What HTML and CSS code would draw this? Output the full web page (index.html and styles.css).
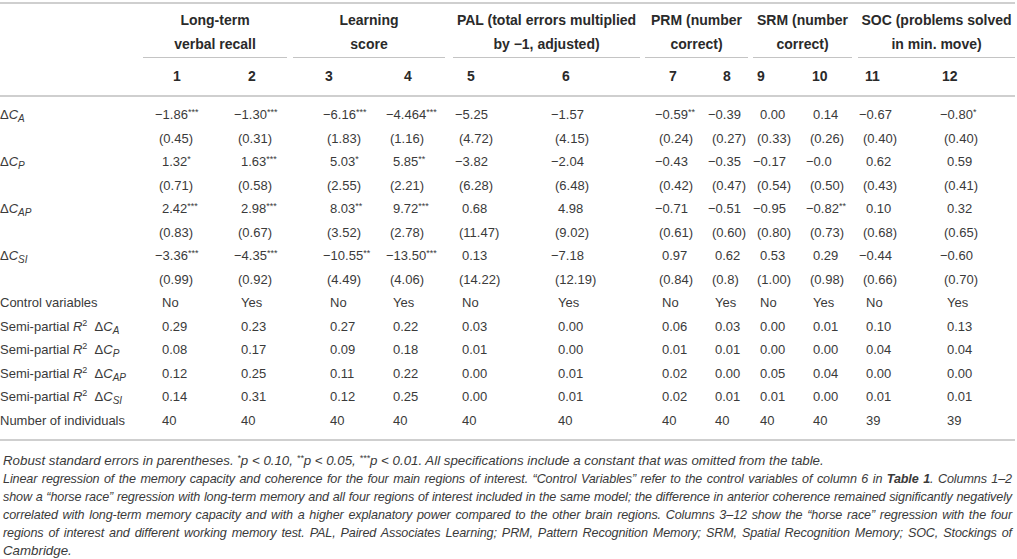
FILE: index.html
```html
<!DOCTYPE html>
<html>
<head>
<meta charset="utf-8">
<link rel="stylesheet" href="styles.css">
</head>
<body>
<div class="page">
<table class="reg">
<colgroup>
<col class="w-lab"><col class="w1"><col class="w2"><col class="w3"><col class="w4"><col class="w5"><col class="w6"><col class="w7"><col class="w8"><col class="w9"><col class="w10"><col class="w11"><col class="w12">
</colgroup>
<thead>
<tr class="groups">
<th></th>
<th colspan="2"><div class="g g1">Long-term<br>verbal recall</div></th>
<th colspan="2"><div class="g g2">Learning<br>score</div></th>
<th colspan="2"><div class="g g3">PAL (total errors multiplied<br>by −1, adjusted)</div></th>
<th colspan="2"><div class="g g4">PRM (number<br>correct)</div></th>
<th colspan="2"><div class="g g5">SRM (number<br>correct)</div></th>
<th colspan="2"><div class="g g6">SOC (problems solved<br>in min. move)</div></th>
</tr>
<tr class="nums">
<th></th><th>1</th><th>2</th><th>3</th><th>4</th><th>5</th><th>6</th><th>7</th><th>8</th><th>9</th><th>10</th><th>11</th><th>12</th>
</tr>
</thead>
<tbody>
<tr class="first">
<th>Δ<i>C</i><sub><i>A</i></sub></th>
<td class="n">−1.86<sup>***</sup></td><td class="n">−1.30<sup>***</sup></td><td class="n">−6.16<sup>***</sup></td><td class="n">−4.464<sup>***</sup></td><td class="n">−5.25</td><td class="n">−1.57</td><td class="n">−0.59<sup>**</sup></td><td class="n">−0.39</td><td>0.00</td><td>0.14</td><td class="n">−0.67</td><td class="n">−0.80<sup>*</sup></td>
</tr>
<tr class="se">
<th></th>
<td>(0.45)</td><td>(0.31)</td><td>(1.83)</td><td>(1.16)</td><td>(4.72)</td><td>(4.15)</td><td>(0.24)</td><td>(0.27)</td><td>(0.33)</td><td>(0.26)</td><td>(0.40)</td><td>(0.40)</td>
</tr>
<tr>
<th>Δ<i>C</i><sub><i>P</i></sub></th>
<td>1.32<sup>*</sup></td><td>1.63<sup>***</sup></td><td>5.03<sup>*</sup></td><td>5.85<sup>**</sup></td><td class="n">−3.82</td><td class="n">−2.04</td><td class="n">−0.43</td><td class="n">−0.35</td><td class="n">−0.17</td><td class="n">−0.0</td><td>0.62</td><td>0.59</td>
</tr>
<tr class="se">
<th></th>
<td>(0.71)</td><td>(0.58)</td><td>(2.55)</td><td>(2.21)</td><td>(6.28)</td><td>(6.48)</td><td>(0.42)</td><td>(0.47)</td><td>(0.54)</td><td>(0.50)</td><td>(0.43)</td><td>(0.41)</td>
</tr>
<tr>
<th>Δ<i>C</i><sub><i>AP</i></sub></th>
<td>2.42<sup>***</sup></td><td>2.98<sup>***</sup></td><td>8.03<sup>**</sup></td><td>9.72<sup>***</sup></td><td>0.68</td><td>4.98</td><td class="n">−0.71</td><td class="n">−0.51</td><td class="n">−0.95</td><td class="n">−0.82<sup>**</sup></td><td>0.10</td><td>0.32</td>
</tr>
<tr class="se">
<th></th>
<td>(0.83)</td><td>(0.67)</td><td>(3.52)</td><td>(2.78)</td><td>(11.47)</td><td>(9.02)</td><td>(0.61)</td><td>(0.60)</td><td>(0.80)</td><td>(0.73)</td><td>(0.68)</td><td>(0.65)</td>
</tr>
<tr>
<th>Δ<i>C</i><sub><i>SI</i></sub></th>
<td class="n">−3.36<sup>***</sup></td><td class="n">−4.35<sup>***</sup></td><td class="n">−10.55<sup>**</sup></td><td class="n">−13.50<sup>***</sup></td><td>0.13</td><td class="n">−7.18</td><td>0.97</td><td>0.62</td><td>0.53</td><td>0.29</td><td class="n">−0.44</td><td class="n">−0.60</td>
</tr>
<tr class="se">
<th></th>
<td>(0.99)</td><td>(0.92)</td><td>(4.49)</td><td>(4.06)</td><td>(14.22)</td><td>(12.19)</td><td>(0.84)</td><td>(0.8)</td><td>(1.00)</td><td>(0.98)</td><td>(0.66)</td><td>(0.70)</td>
</tr>
<tr>
<th>Control variables</th>
<td>No</td><td>Yes</td><td>No</td><td>Yes</td><td>No</td><td>Yes</td><td>No</td><td>Yes</td><td>No</td><td>Yes</td><td>No</td><td>Yes</td>
</tr>
<tr>
<th>Semi-partial <i>R</i><sup class="pw">2</sup> &nbsp;Δ<i>C</i><sub><i>A</i></sub></th>
<td>0.29</td><td>0.23</td><td>0.27</td><td>0.22</td><td>0.03</td><td>0.00</td><td>0.06</td><td>0.03</td><td>0.00</td><td>0.01</td><td>0.10</td><td>0.13</td>
</tr>
<tr>
<th>Semi-partial <i>R</i><sup class="pw">2</sup> &nbsp;Δ<i>C</i><sub><i>P</i></sub></th>
<td>0.08</td><td>0.17</td><td>0.09</td><td>0.18</td><td>0.01</td><td>0.00</td><td>0.01</td><td>0.01</td><td>0.00</td><td>0.00</td><td>0.04</td><td>0.04</td>
</tr>
<tr>
<th>Semi-partial <i>R</i><sup class="pw">2</sup> &nbsp;Δ<i>C</i><sub><i>AP</i></sub></th>
<td>0.12</td><td>0.25</td><td>0.11</td><td>0.22</td><td>0.00</td><td>0.01</td><td>0.02</td><td>0.00</td><td>0.05</td><td>0.04</td><td>0.00</td><td>0.00</td>
</tr>
<tr>
<th>Semi-partial <i>R</i><sup class="pw">2</sup> &nbsp;Δ<i>C</i><sub><i>SI</i></sub></th>
<td>0.14</td><td>0.31</td><td>0.12</td><td>0.25</td><td>0.00</td><td>0.01</td><td>0.02</td><td>0.01</td><td>0.01</td><td>0.00</td><td>0.01</td><td>0.01</td>
</tr>
<tr class="last">
<th>Number of individuals</th>
<td>40</td><td>40</td><td>40</td><td>40</td><td>40</td><td>40</td><td>40</td><td>40</td><td>40</td><td>40</td><td>39</td><td>39</td>
</tr>
</tbody>
</table>
<div class="notes">
<span class="line first-note">Robust standard errors in parentheses. <sup>*</sup>p &lt; 0.10, <sup>**</sup>p &lt; 0.05, <sup>***</sup>p &lt; 0.01. All specifications include a constant that was omitted from the table.</span>
<span class="line just">Linear regression of the memory capacity and coherence for the four main regions of interest. “Control Variables” refer to the control variables of column 6 in <b>Table 1</b>. Columns 1–2</span>
<span class="line just">show a “horse race” regression with long-term memory and all four regions of interest included in the same model; the difference in anterior coherence remained significantly negatively</span>
<span class="line just">correlated with long-term memory capacity and with a higher explanatory power compared to the other brain regions. Columns 3–12 show the “horse race” regression with the four</span>
<span class="line just">regions of interest and different working memory test. PAL, Paired Associates Learning; PRM, Pattern Recognition Memory; SRM, Spatial Recognition Memory; SOC, Stockings of</span>
<span class="line last-note">Cambridge.</span>
</div>
</div>
</body>
</html>
```
FILE: styles.css
```css
html, body {
  margin: 0;
  padding: 0;
  background: #ffffff;
}

.page {
  padding-top: 2px;
  width: 1015px;
  font-family: "Liberation Sans", Arial, sans-serif;
  font-size: 13px;
  color: #3a3a3a;
}

.reg {
  width: 1015px;
  table-layout: fixed;
  border-collapse: collapse;
  border-top: 2px solid #cfcfcf;
  border-bottom: 2px solid #cfcfcf;
}

.w-lab { width: 143px; }
.w1 { width: 72px; }
.w2 { width: 78px; }
.w3 { width: 76px; }
.w4 { width: 84px; }
.w5 { width: 67px; }
.w6 { width: 125px; }
.w7 { width: 56px; }
.w8 { width: 52px; }
.w9 { width: 47px; }
.w10 { width: 58px; }
.w11 { width: 72px; }
.w12 { width: 85px; }

.reg th, .reg td {
  padding: 0;
  white-space: nowrap;
  font-weight: normal;
  text-align: left;
  vertical-align: top;
}

/* group header row */
.groups th {
  padding-top: 4px;
}
.g {
  font-weight: bold;
  font-size: 14px;
  color: #2a2a2a;
  line-height: 24px;
  text-align: center;
  padding-bottom: 1px;
  border-bottom: 1px solid #c4c4c4;
}
.g1 { margin-right: 6px; }
.g2 { margin-right: 8px; }
.g3 { margin-right: 5px; }
.g4 { margin-right: 5px; }
.g5 { margin-right: 6px; }
.g6 { margin-right: 0; }

/* column number row */
.nums {
  border-bottom: 2px solid #cfcfcf;
}
.nums th {
  font-weight: bold;
  font-size: 14px;
  color: #2a2a2a;
  line-height: 37px;
}
.nums th:nth-child(2) { padding-left: 30px; }
.nums th:nth-child(3) { padding-left: 33px; }
.nums th:nth-child(4) { padding-left: 32px; }
.nums th:nth-child(5) { padding-left: 35px; }
.nums th:nth-child(6) { padding-left: 14px; }
.nums th:nth-child(7) { padding-left: 42px; }
.nums th:nth-child(8) { padding-left: 24px; }
.nums th:nth-child(9) { padding-left: 22px; }
.nums th:nth-child(10) { padding-left: 4px; }
.nums th:nth-child(11) { padding-left: 12px; }
.nums th:nth-child(12) { padding-left: 7px; }
.nums th:nth-child(13) { padding-left: 12px; }

/* body */
tbody th, tbody td {
  line-height: 23.5px;
}
tbody th {
  padding-left: 3px;
}
tbody tr.first th, tbody tr.first td { padding-top: 6px; }
tbody tr.last th, tbody tr.last td { padding-bottom: 7px; }

tbody td:nth-child(2) { padding-left: 19px; }
tbody td:nth-child(3) { padding-left: 26px; }
tbody td:nth-child(4) { padding-left: 37px; }
tbody td:nth-child(5) { padding-left: 24px; }
tbody td:nth-child(6) { padding-left: 9px; }
tbody td:nth-child(7) { padding-left: 38px; }
tbody td:nth-child(8) { padding-left: 17px; }
tbody td:nth-child(9) { padding-left: 14px; }
tbody td:nth-child(10) { padding-left: 7px; }
tbody td:nth-child(11) { padding-left: 13px; }
tbody td:nth-child(12) { padding-left: 8px; }
tbody td:nth-child(13) { padding-left: 17px; }

tbody td.n { text-indent: -7px; }
tbody tr.se td { text-indent: -3px; }

sup {
  font-size: 9px;
  line-height: 0;
  vertical-align: 4px;
}
sup.pw {
  font-size: 9px;
  vertical-align: 5px;
}
sub {
  font-size: 10px;
  line-height: 0;
  vertical-align: -3px;
}

/* notes */
.notes {
  margin-top: 11px;
  font-style: italic;
  font-size: 13px;
  line-height: 18px;
  color: #3a3a3a;
  padding-left: 3px;
  width: 1009px;
}
.notes .line {
  display: block;
}
.notes .first-note {
  font-size: 13.3px;
}
.notes .just {
  font-size: 12.6px;
  letter-spacing: -0.12px;
  word-spacing: 0;
  text-align: justify;
  text-align-last: justify;
}
.notes .last-note {
  font-size: 13.3px;
}
.notes b {
  font-weight: bold;
}
```
